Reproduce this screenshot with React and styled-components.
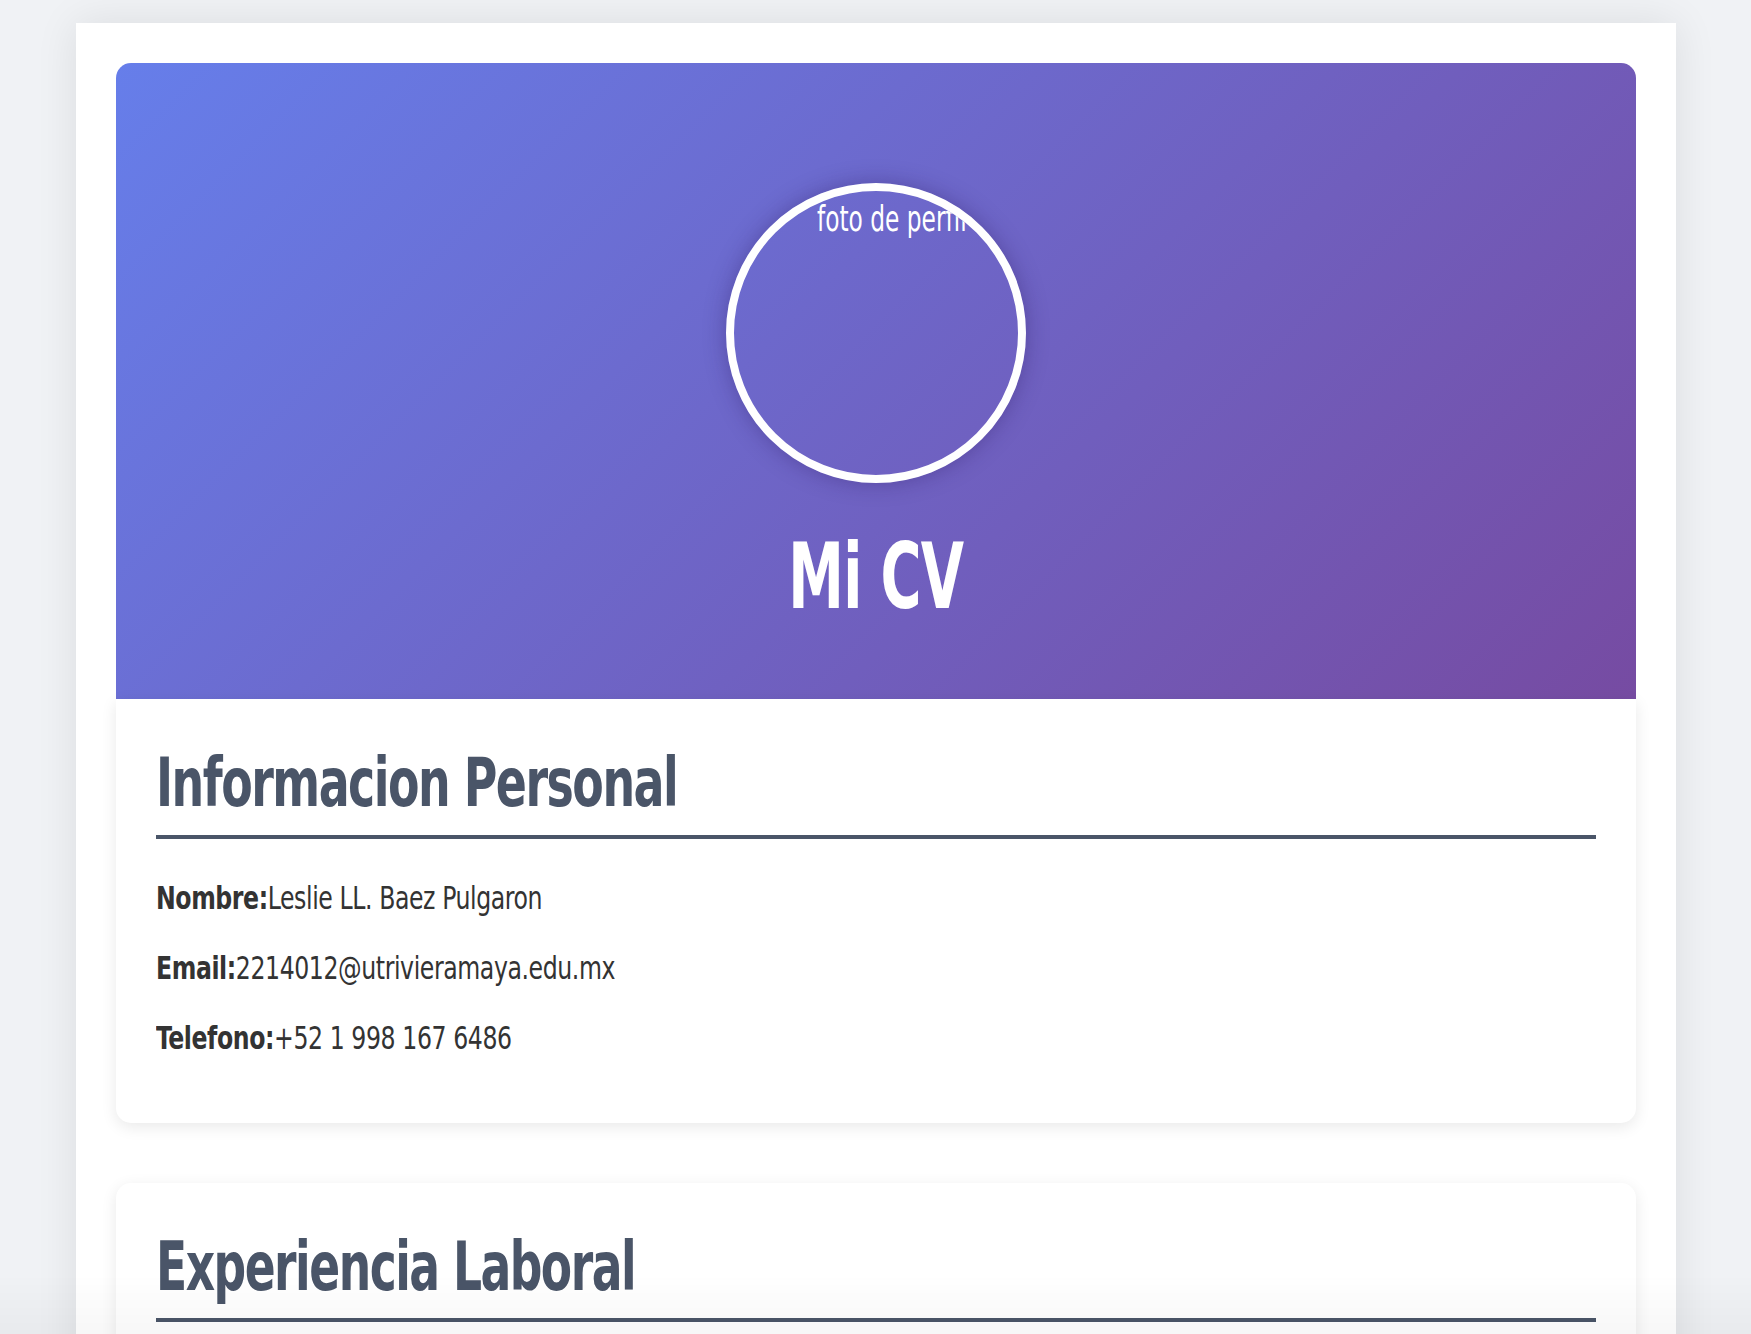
import styled, { createGlobalStyle } from "styled-components";

const GlobalStyle = createGlobalStyle`
  html, body {
    margin: 0;
    padding: 0;
    background: #f0f2f5;
    font-family: "Liberation Sans Narrow", "Arial Narrow", "DejaVu Sans Condensed", "Liberation Sans", sans-serif;
    font-stretch: condensed;
    color: #333;
  }
`;

const Page = styled.div`
  max-width: 1600px;
  margin: 23px auto 0;
  padding: 40px 40px 40px;
  background: #ffffff;
  box-shadow: 0 0 40px rgba(0, 0, 0, 0.09);
  box-sizing: border-box;
`;

// condensed lettering: the page font is narrower than what is installed
const Squeeze = styled.span`
  display: inline-block;
  white-space: nowrap;
  transform: scaleX(${(p) => p.$sx});
  transform-origin: ${(p) => p.$origin || "left"} center;
`;

const Header = styled.header`
  display: flex;
  flex-direction: column;
  align-items: center;
  padding: 120px 0 68px;
  border-radius: 15px 15px 0 0;
  background: linear-gradient(135deg, #667eea 0%, #764ba2 100%);
`;

const Avatar = styled.div`
  width: 300px;
  height: 300px;
  box-sizing: border-box;
  border: 8px solid #ffffff;
  border-radius: 50%;
  overflow: hidden;
  box-shadow: 0 0 22px rgba(40, 20, 90, 0.35);
`;

const AltText = styled.div`
  padding: 7px 0 0 83px;
  white-space: nowrap;
  color: #ffffff;
  font-size: 35px;
  line-height: 1.2;
  font-weight: 500;
`;

const Title = styled.h1`
  margin: 40px 0 0;
  color: #ffffff;
  font-size: 90px;
  line-height: 1.2;
  font-weight: 700;
  letter-spacing: -1px;
`;

const Card = styled.section`
  padding: 43px 40px 33px;
  margin-bottom: 60px;
  background: #ffffff;
  border-radius: ${(p) => (p.$first ? "0 0 15px 15px" : "15px")};
  box-shadow: 0 4px 16px rgba(0, 0, 0, 0.09);
`;

const SectionTitle = styled.h2`
  margin: 0 0 40px;
  padding-bottom: 11px;
  border-bottom: 4px solid #4a5568;
  color: #4a5568;
  font-size: 68px;
  line-height: 1.2;
  font-weight: 700;
  letter-spacing: -2px;
`;

const Field = styled.p`
  margin: 0 0 32px;
  font-size: 32px;
  line-height: 1.2;
  letter-spacing: -0.5px;
  color: #333;

  strong {
    font-weight: 700;
  }
`;

const BottomFade = styled.div`
  position: fixed;
  left: 0;
  right: 0;
  bottom: 0;
  height: 60px;
  pointer-events: none;
  background: linear-gradient(to bottom, rgba(0, 0, 0, 0), rgba(0, 0, 0, 0.03));
`;

const personal = [
  ["Nombre:", "Leslie LL. Baez Pulgaron"],
  ["Email:", "2214012@utrivieramaya.edu.mx"],
  ["Telefono:", "+52 1 998 167 6486"],
];

export default function App() {
  return (
    <>
      <GlobalStyle />
      <Page>
        <Header>
          <Avatar>
            <AltText>
              <Squeeze $sx={0.74}>foto de perfil</Squeeze>
            </AltText>
          </Avatar>
          <Title>
            <Squeeze $sx={0.69} $origin="center">Mi CV</Squeeze>
          </Title>
        </Header>

        <Card $first>
          <SectionTitle>
            <Squeeze $sx={0.75}>Informacion Personal</Squeeze>
          </SectionTitle>
          {personal.map(([label, value]) => (
            <Field key={label}>
              <Squeeze $sx={0.82}>
                <strong>{label}</strong>
                {value}
              </Squeeze>
            </Field>
          ))}
        </Card>

        <Card>
          <SectionTitle>
            <Squeeze $sx={0.745}>Experiencia Laboral</Squeeze>
          </SectionTitle>
          <Field>
            <Squeeze $sx={0.82}>
              <strong>Puesto:</strong>Asistente administrativo
            </Squeeze>
          </Field>
        </Card>
      </Page>
      <BottomFade />
    </>
  );
}
